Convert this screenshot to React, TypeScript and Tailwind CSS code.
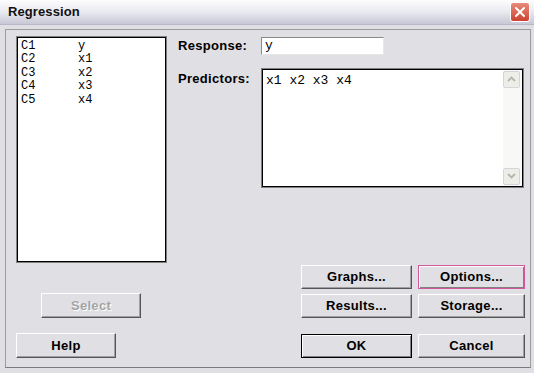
import React from 'react';

const columns = [
  { id: 'C1', name: 'y' },
  { id: 'C2', name: 'x1' },
  { id: 'C3', name: 'x2' },
  { id: 'C4', name: 'x3' },
  { id: 'C5', name: 'x4' },
];

function DlgButton({
  label,
  className = '',
  variant = 'normal',
}: {
  label: string;
  className?: string;
  variant?: 'normal' | 'default' | 'focus' | 'disabled';
}) {
  let frame =
    'border border-t-white border-l-white border-r-[#555] border-b-[#555] shadow-[inset_-1px_-1px_0_#a0a0a0]';
  if (variant === 'default')
    frame = 'border border-black shadow-[inset_1px_1px_0_#fff,inset_-1px_-1px_0_#808080]';
  if (variant === 'focus')
    frame = 'border border-[#d0589a] shadow-[inset_1px_1px_0_#fff,inset_-1px_-1px_0_#808080]';
  const text =
    variant === 'disabled' ? 'text-[#a4a4a4] [text-shadow:1px_1px_0_#fff]' : 'text-black';
  return (
    <div
      className={`flex items-center justify-center bg-[#e0dfe3] text-[13px] font-bold tracking-[0.3px] ${frame} ${text} ${className}`}
    >
      {label}
    </div>
  );
}

function ScrollArrow({ up }: { up?: boolean }) {
  return (
    <div className="w-[17px] h-[17px] rounded-[2px] border border-[#d2d6dc] bg-[#eeeee9] flex items-center justify-center">
      <svg width="9" height="6" viewBox="0 0 9 6">
        <path
          d={up ? 'M1 5 L4.5 1.5 L8 5' : 'M1 1 L4.5 4.5 L8 1'}
          fill="none"
          stroke="#b5b5b0"
          strokeWidth="1.8"
        />
      </svg>
    </div>
  );
}

export default function App() {
  return (
    <div className="w-[534px] h-[373px] bg-[#e0dfe3] flex flex-col font-['Liberation_Sans',Arial,sans-serif] overflow-hidden">
      {/* Title bar */}
      <div className="h-[25px] flex items-center justify-between pl-[8px] pr-[4px] bg-gradient-to-b from-[#fdfdfe] via-[#e9e9f0] to-[#c8c8d6] border-b border-[#b8b8c4]">
        <span className="text-[13px] font-bold text-[#111] tracking-[0.1px]">Regression</span>
        <div className="w-[20px] h-[20px] rounded-[3px] border border-white bg-gradient-to-b from-[#e88a7a] to-[#cc4030] flex items-center justify-center">
          <svg width="12" height="12" viewBox="0 0 12 12">
            <path d="M2 2 L10 10 M10 2 L2 10" stroke="#fff" strokeWidth="2" strokeLinecap="round" />
          </svg>
        </div>
      </div>

      {/* Body */}
      <div className="flex-1 pl-[5px] pr-[3px] pt-[4px] pb-[5px]">
        <div className="h-full border border-[#9c9c9c] border-b-[#7a7a7a] flex pl-[10px] pt-[6px] pb-[9px]">
          {/* Left column */}
          <div className="w-[151px] flex flex-col">
            <div className="h-[227px] border border-[#808080] bg-white">
              <div className="h-full border border-black pl-[3px] pt-[2px] font-['Liberation_Mono',monospace] text-[12px] leading-[13.4px] text-black">
                {columns.map((c) => (
                  <div key={c.id} className="flex h-[13.4px]">
                    <span className="w-[57px]">{c.id}</span>
                    <span>{c.name}</span>
                  </div>
                ))}
              </div>
            </div>
            <DlgButton label="Select" variant="disabled" className="ml-[25px] mt-[30px] w-[100px] h-[25px]" />
            <DlgButton label="Help" className="mt-[15px] w-[100px] h-[25px]" />
          </div>

          {/* Right column */}
          <div className="ml-[11px] flex-1 flex flex-col">
            <div className="flex items-center">
              <span className="w-[83px] text-[13px] font-bold tracking-[0.3px] text-black">Response:</span>
              <div className="w-[123px] h-[18px] bg-white border border-t-[#8a8a8a] border-l-[#8a8a8a] border-r-[#e8e8e8] border-b-[#e8e8e8] pl-[3px] font-['Liberation_Mono',monospace] text-[13px] leading-[15px]">
                y
              </div>
            </div>
            <div className="flex items-start mt-[12px]">
              <span className="w-[83px] text-[13px] font-bold tracking-[0.3px] text-black pt-[1px]">Predictors:</span>
              <div className="w-[263px] h-[120px] border border-[#808080] bg-white">
                <div className="h-full border border-black flex">
                  <div className="flex-1 pl-[3px] pt-[4px] font-['Liberation_Mono',monospace] text-[13px] leading-[14px] whitespace-pre">
                    x1 x2 x3 x4
                  </div>
                  <div className="w-[19px] bg-[#f8f8f6] flex flex-col justify-between py-[1px] pr-[1px]">
                    <ScrollArrow up />
                    <ScrollArrow />
                  </div>
                </div>
              </div>
            </div>

            <div className="mt-auto ml-[123px] grid grid-cols-[111px_107px] gap-x-[6px]">
              <DlgButton label="Graphs..." className="h-[24px]" />
              <DlgButton label="Options..." variant="focus" className="h-[24px]" />
              <DlgButton label="Results..." className="h-[24px] mt-[5px]" />
              <DlgButton label="Storage..." className="h-[24px] mt-[5px]" />
              <DlgButton label="OK" variant="default" className="h-[24px] mt-[16px]" />
              <DlgButton label="Cancel" className="h-[24px] mt-[16px]" />
            </div>
          </div>
        </div>
      </div>
    </div>
  );
}
